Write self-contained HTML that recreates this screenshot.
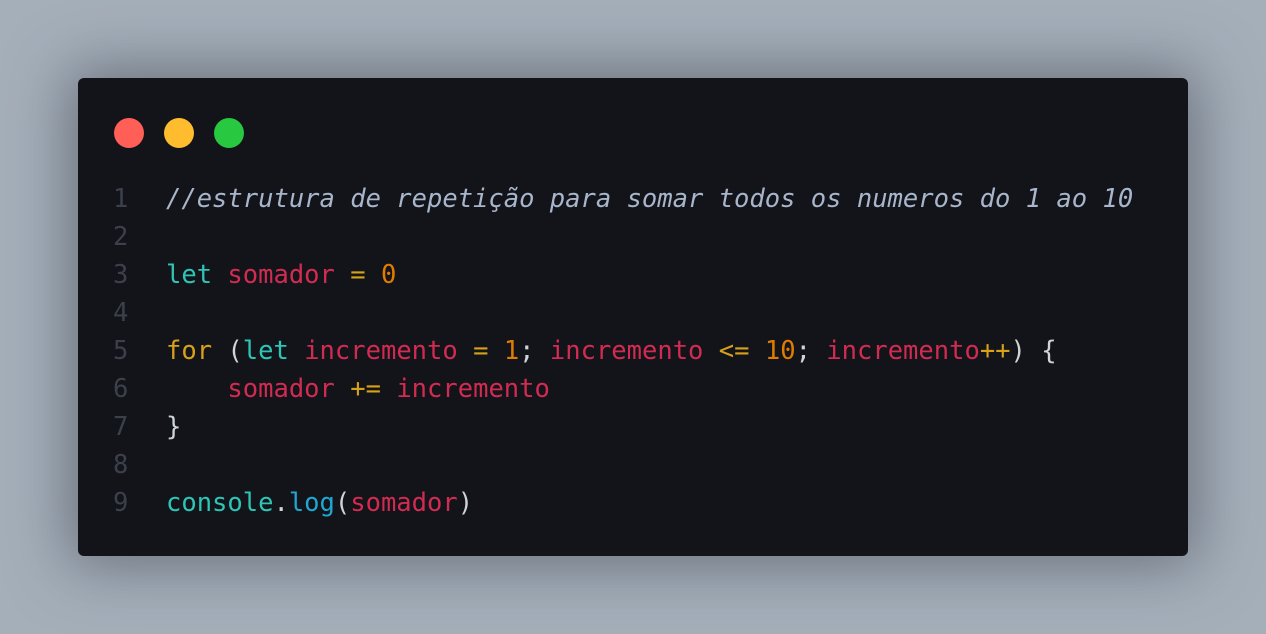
<!DOCTYPE html>
<html><head><meta charset="utf-8"><style>
body{margin:0;width:1266px;height:634px;background:#a5afba;overflow:hidden;position:relative}
.card{position:absolute;left:78px;top:78px;width:1110px;height:478px;background:#121419;border-radius:6px;box-shadow:0 0 60px 10px rgba(60,66,76,.55)}
.dot{position:absolute;top:40px;width:30px;height:30px;border-radius:50%}
.code{position:absolute;left:0;top:102px;font-family:"DejaVu Sans Mono","Liberation Mono",monospace;font-size:25.5px;letter-spacing:0;line-height:38px;color:#cfd3da;white-space:pre}
.ln{position:absolute;left:35px;width:20px;color:#3b404b}
.tx{position:absolute;left:88px}
.c{color:#a8b5cb;font-style:italic}.k{color:#2ec4b6}.v{color:#d22b52}.o{color:#d7a11a}.n{color:#e07d00}.f{color:#1ea7d3}
</style></head><body>
<div class="card">
<div class="dot" style="left:36px;background:#ff5f57"></div>
<div class="dot" style="left:86px;background:#febc2e"></div>
<div class="dot" style="left:136px;background:#28c840"></div>
<div class="code">
<div class="ln" style="top:0">1
2
3
4
5
6
7
8
9</div>
<div class="tx" style="top:0"><span class="c">//estrutura de repetição para somar todos os numeros do 1 ao 10</span>

<span class="k">let</span> <span class="v">somador</span> <span class="o">=</span> <span class="n">0</span>

<span class="o">for</span> (<span class="k">let</span> <span class="v">incremento</span> <span class="o">=</span> <span class="n">1</span>; <span class="v">incremento</span> <span class="o">&lt;=</span> <span class="n">10</span>; <span class="v">incremento</span><span class="o">++</span>) {
    <span class="v">somador</span> <span class="o">+=</span> <span class="v">incremento</span>
}

<span class="k">console</span>.<span class="f">log</span>(<span class="v">somador</span>)</div>
</div>
</div>
</body></html>
